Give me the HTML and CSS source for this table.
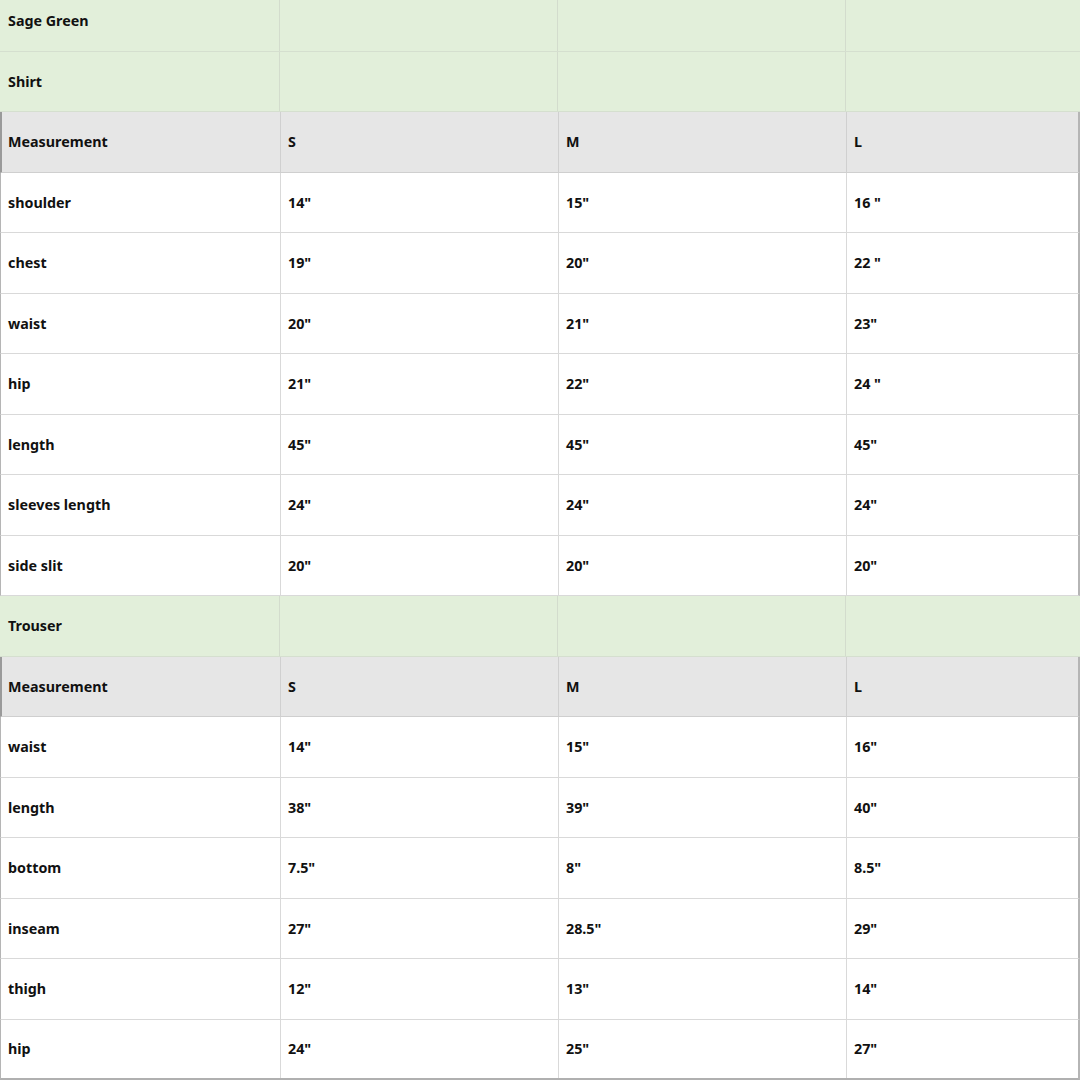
FILE: index.html
```html
<!DOCTYPE html>
<html>
<head>
<meta charset="utf-8">
<link rel="stylesheet" href="styles.css">
</head>
<body>
<div class="sheet">
  <div class="row green first"><div class="cell">Sage Green</div><div class="cell"></div><div class="cell"></div><div class="cell"></div></div>
  <div class="row green"><div class="cell">Shirt</div><div class="cell"></div><div class="cell"></div><div class="cell"></div></div>
  <div class="row head"><div class="cell">Measurement</div><div class="cell">S</div><div class="cell">M</div><div class="cell">L</div></div>
  <div class="row"><div class="cell">shoulder</div><div class="cell">14"</div><div class="cell">15"</div><div class="cell">16 "</div></div>
  <div class="row"><div class="cell">chest</div><div class="cell">19"</div><div class="cell">20"</div><div class="cell">22 "</div></div>
  <div class="row"><div class="cell">waist</div><div class="cell">20"</div><div class="cell">21"</div><div class="cell">23"</div></div>
  <div class="row"><div class="cell">hip</div><div class="cell">21"</div><div class="cell">22"</div><div class="cell">24 "</div></div>
  <div class="row"><div class="cell">length</div><div class="cell">45"</div><div class="cell">45"</div><div class="cell">45"</div></div>
  <div class="row"><div class="cell">sleeves length</div><div class="cell">24"</div><div class="cell">24"</div><div class="cell">24"</div></div>
  <div class="row"><div class="cell">side slit</div><div class="cell">20"</div><div class="cell">20"</div><div class="cell">20"</div></div>
  <div class="row green"><div class="cell">Trouser</div><div class="cell"></div><div class="cell"></div><div class="cell"></div></div>
  <div class="row head"><div class="cell">Measurement</div><div class="cell">S</div><div class="cell">M</div><div class="cell">L</div></div>
  <div class="row"><div class="cell">waist</div><div class="cell">14"</div><div class="cell">15"</div><div class="cell">16"</div></div>
  <div class="row"><div class="cell">length</div><div class="cell">38"</div><div class="cell">39"</div><div class="cell">40"</div></div>
  <div class="row"><div class="cell">bottom</div><div class="cell">7.5"</div><div class="cell">8"</div><div class="cell">8.5"</div></div>
  <div class="row"><div class="cell">inseam</div><div class="cell">27"</div><div class="cell">28.5"</div><div class="cell">29"</div></div>
  <div class="row"><div class="cell">thigh</div><div class="cell">12"</div><div class="cell">13"</div><div class="cell">14"</div></div>
  <div class="row last"><div class="cell">hip</div><div class="cell">24"</div><div class="cell">25"</div><div class="cell">27"</div></div>
</div>
</body>
</html>
```
FILE: styles.css
```css
html, body {
  margin: 0;
  padding: 0;
  background: #ffffff;
}
.sheet {
  width: 1080px;
  height: 1080px;
  overflow: hidden;
  font-family: "Noto Sans", "Open Sans", sans-serif;
  font-weight: 700;
  font-size: 14.3px;
  color: #111111;
}
.row {
  display: grid;
  grid-template-columns: 280px 278px 288px 234px;
  height: 60.5px;
  box-sizing: border-box;
  border-bottom: 1px solid #d9d9d9;
  border-left: 1px solid #b5b5b5;
  border-right: 2px solid #b5b5b5;
  background: #ffffff;
}
.row.green {
  background: #e2efda;
  border-left: none;
  border-right: none;
  border-bottom: 1px solid #d5dfcf;
}
.row.head {
  background: #e6e6e6;
  border-left: 2px solid #9a9a9a;
  border-bottom: 1px solid #cfcfcf;
  grid-template-columns: 279px 278px 288px 233px;
}
.row.first {
  height: 51.5px;
}
.row.first .cell {
  padding-bottom: 9px;
}
.row.last {
  border-bottom: 2px solid #b0b0b0;
}
.cell {
  display: flex;
  align-items: center;
  padding-left: 7px;
  box-sizing: border-box;
  border-right: 1px solid #d9d9d9;
  white-space: nowrap;
}
.row .cell:last-child {
  border-right: none;
}
.row.green .cell {
  border-right-color: #d3dccd;
}
.row.green .cell:first-child {
  padding-left: 8px;
}
.row.head .cell {
  border-right-color: #d0d0d0;
}
.row.head .cell:first-child {
  padding-left: 6px;
}
```
